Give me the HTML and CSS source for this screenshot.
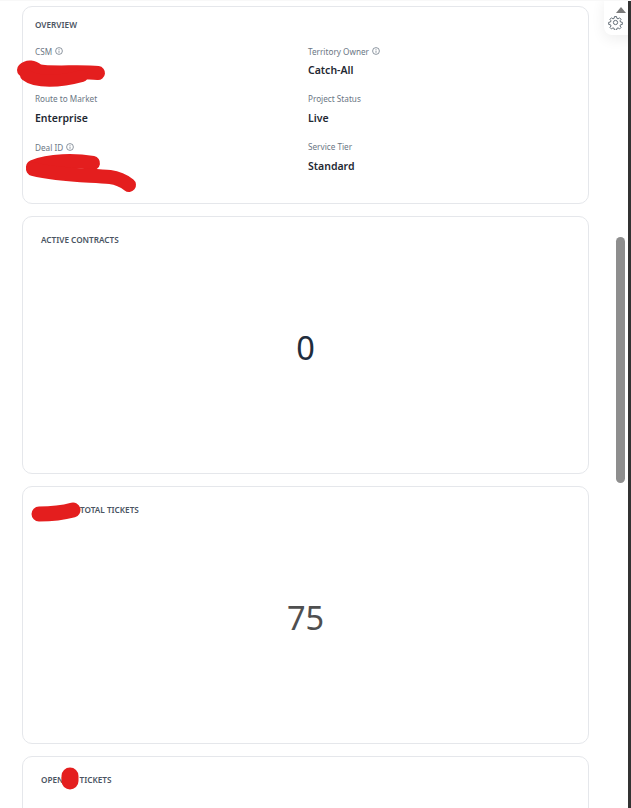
FILE: index.html
```html
<!DOCTYPE html>
<html lang="en">
<head>
  <meta charset="UTF-8" />
  <meta name="viewport" content="width=device-width, initial-scale=1.0" />
  <title>Account Dashboard</title>
  <link rel="stylesheet" href="styles.css">
</head>
<body>
  <div class="frame">
    <main class="content">
      <!-- Overview -->
      <section class="card overview">
        <h2 class="card-title">OVERVIEW</h2>
        <div class="fields">
          <div class="field">
            <div class="field-label with-info">CSM
              <svg class="info" viewBox="0 0 8 8"><circle cx="4" cy="4" r="3.4"/><path d="M4 3.6v2.2M4 2v.8"/></svg>
            </div>
            <div class="field-value">&nbsp;</div>
          </div>
          <div class="field">
            <div class="field-label with-info">Territory Owner
              <svg class="info" viewBox="0 0 8 8"><circle cx="4" cy="4" r="3.4"/><path d="M4 3.6v2.2M4 2v.8"/></svg>
            </div>
            <div class="field-value">Catch-All</div>
          </div>
          <div class="field">
            <div class="field-label">Route to Market</div>
            <div class="field-value">Enterprise</div>
          </div>
          <div class="field">
            <div class="field-label">Project Status</div>
            <div class="field-value">Live</div>
          </div>
          <div class="field">
            <div class="field-label with-info">Deal ID
              <svg class="info" viewBox="0 0 8 8"><circle cx="4" cy="4" r="3.4"/><path d="M4 3.6v2.2M4 2v.8"/></svg>
            </div>
            <div class="field-value">&nbsp;</div>
          </div>
          <div class="field">
            <div class="field-label">Service Tier</div>
            <div class="field-value">Standard</div>
          </div>
        </div>
      </section>
      <!-- Metric cards -->
      <section class="card metric">
        <h2 class="card-title">ACTIVE CONTRACTS</h2>
        <div class="metric-value dark">0</div>
      </section>
      <section class="card metric">
        <h2 class="card-title"><span class="hidden-word wide"></span>TOTAL TICKETS</h2>
        <div class="metric-value">75</div>
      </section>
      <section class="card metric">
        <h2 class="card-title">OPEN<span class="hidden-word narrow"></span>TICKETS</h2>
      </section>
    </main>

    <!-- Settings button and scrollbar sit over the page -->
    <div class="settings">
      <svg class="gear" viewBox="0 0 24 24">
        <path d="M10.3 2.5h3.4l.5 2.9 1.9.8 2.4-1.7 2.4 2.4-1.7 2.4.8 1.9 2.9.5v3.4l-2.9.5-.8 1.9 1.7 2.4-2.4 2.4-2.4-1.7-1.9.8-.5 2.9h-3.4l-.5-2.9-1.9-.8-2.4 1.7-2.4-2.4 1.7-2.4-.8-1.9-2.9-.5v-3.4l2.9-.5.8-1.9-1.7-2.4 2.4-2.4 2.4 1.7 1.9-.8z"/>
        <circle cx="12" cy="12" r="3.4"/>
      </svg>
    </div>
    <div class="scrollbar">
      <div class="scroll-arrow"></div>
      <div class="scroll-thumb"></div>
    </div>
    <div class="window-edge"></div>

    <!-- Redaction marks -->
    <svg class="marks" viewBox="0 0 631 808">
      <path d="M24 70C28 66 33 67 38 71 50 74 80 71 98 73" stroke-width="14"/>
      <path d="M26 75C36 83 60 82 82 76" stroke-width="12"/>
      <path d="M33 167C50 160 75 160 93 163" stroke-width="14"/>
      <path d="M33 169C60 176 90 175 110 177 118 178 124 181 129 185" stroke-width="14"/>
      <path d="M39 514C50 514 62 513 73 510" stroke-width="15"/>
      <path d="M70 776V781" stroke-width="17"/>
    </svg>
  </div>
</body>
</html>
```

FILE: styles.css
```css
html, body {
  margin: 0;
  padding: 0;
}
body {
  font-family: "Noto Sans", "Open Sans", Arial, sans-serif;
  background: #fff;
  color: #1f2933;
}
.frame {
  position: relative;
  width: 631px;
  height: 808px;
  overflow: hidden;
  border-top: 1px solid #f8f8f8;
  box-sizing: border-box;
}
.content {
  display: flex;
  flex-direction: column;
  gap: 12px;
  padding: 5px 42px 0 22px;
}
.card {
  flex: none;
  box-sizing: border-box;
  border: 1px solid #e5e7eb;
  border-radius: 10px;
  background: #fff;
}
.card-title {
  margin: 0;
  font-size: 8.2px;
  line-height: 12px;
  font-weight: 600;
  color: #4a5462;
  white-space: nowrap;
}
/* Overview */
.overview {
  height: 198px;
  padding: 12px 12px 0;
}
.fields {
  display: grid;
  grid-template-columns: 273px 1fr;
  grid-auto-rows: 48px;
  margin-top: 12px;
}
.field-label {
  display: flex;
  align-items: center;
  gap: 3px;
  height: 14px;
  font-size: 8.2px;
  color: #6b7684;
}
.field-label.with-info {
  margin: 1px 0 -1px;
}
.field-value {
  margin-top: 3px;
  font-size: 10.5px;
  line-height: 20px;
  font-weight: 600;
  color: #1f2933;
}
.info {
  width: 8px;
  height: 8px;
  fill: none;
  stroke: #5f6b7a;
  stroke-width: 0.7;
}
/* Metric cards */
.metric {
  height: 258px;
  padding: 17px 18px 0;
}
.metric-value {
  margin-top: 71px;
  font-size: 32.5px;
  line-height: 62px;
  text-align: center;
  color: #4f4f4f;
}
.metric-value.dark {
  color: #1f2d3d;
}
.hidden-word {
  display: inline-block;
}
.hidden-word.wide {
  width: 39px;
}
.hidden-word.narrow {
  width: 16px;
}
/* Overlays */
.settings {
  position: absolute;
  top: -6px;
  left: 604px;
  width: 40px;
  height: 40px;
  display: flex;
  justify-content: flex-start;
  align-items: flex-end;
  border-radius: 8px;
  background: #fff;
  box-shadow: 0 4px 14px rgba(0, 0, 0, 0.07);
}
.gear {
  width: 15px;
  height: 15px;
  margin: 0 0 5px 4px;
  fill: none;
  stroke: #5c6670;
  stroke-width: 1.5;
  stroke-linejoin: round;
}
.scrollbar {
  position: absolute;
  top: 0;
  left: 615px;
  width: 13px;
  height: 808px;
}
.scroll-arrow {
  position: absolute;
  top: 6px;
  left: 1px;
  width: 0;
  height: 0;
  border-left: 5px solid transparent;
  border-right: 5px solid transparent;
  border-bottom: 6px solid #7a7a7a;
}
.scroll-thumb {
  position: absolute;
  top: 236px;
  left: 1px;
  width: 9px;
  height: 246px;
  border-radius: 5px;
  background: #8e8e8e;
}
.window-edge {
  position: absolute;
  top: 0;
  left: 628px;
  width: 3px;
  height: 808px;
  background: #333;
}
.marks {
  position: absolute;
  top: -1px;
  left: 0;
  width: 631px;
  height: 808px;
  fill: none;
  stroke: #e41e1e;
  stroke-linecap: round;
  stroke-linejoin: round;
  pointer-events: none;
}
```
